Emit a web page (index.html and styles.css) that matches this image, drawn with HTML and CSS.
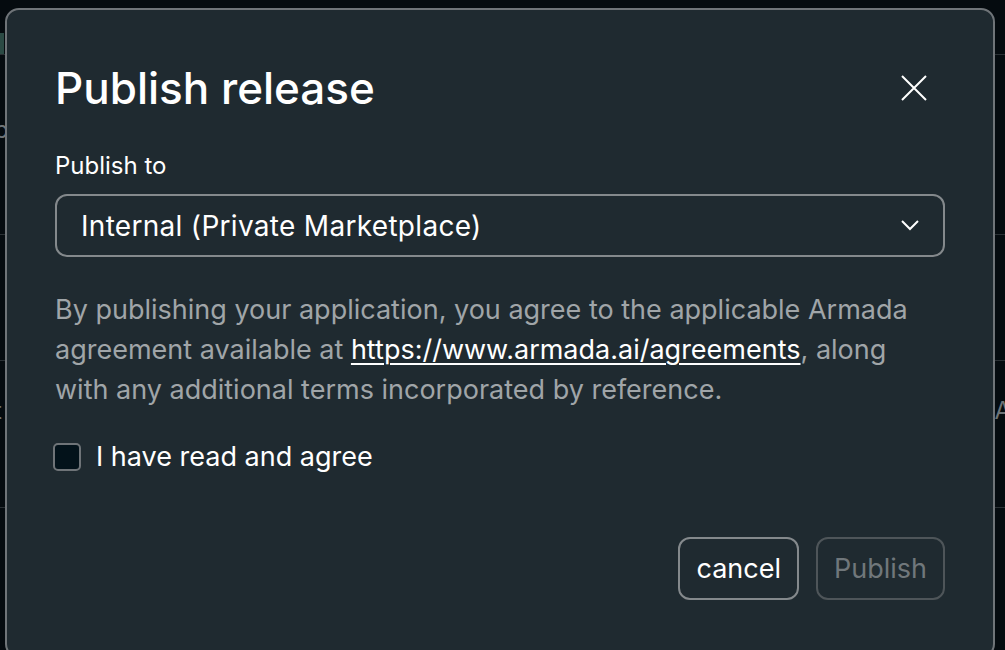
FILE: index.html
```html
<!DOCTYPE html>
<html lang="en">
<head>
  <meta charset="UTF-8">
  <title>Publish release</title>
  <link rel="stylesheet" href="styles.css">
</head>
<body>
  <!-- releases list behind the dialog -->
  <div class="page">
    <div class="row row-head"><span class="tag"></span></div>
    <div class="row row-a"><span class="cell">p</span></div>
    <div class="row row-b"></div>
    <div class="row row-c"><span class="cell">t</span><span class="cell">A</span></div>
    <div class="row row-d"></div>
  </div>

  <div class="overlay">
    <div class="modal">
      <div class="modal-header">
        <h1>Publish release</h1>
        <button class="close" title="Close">
          <svg width="26" height="26" viewBox="0 0 26 26" fill="none" stroke="#fff" stroke-width="2">
            <path d="M1 1L25 25M25 1L1 25"/>
          </svg>
        </button>
      </div>

      <label class="field-label" for="target">Publish to</label>
      <div class="select">
        <span>Internal (Private Marketplace)</span>
        <svg width="18" height="11" viewBox="0 0 18 11" fill="none" stroke="#fff" stroke-width="2">
          <path d="M1 1l8 8 8-8"/>
        </svg>
      </div>

      <p class="terms">
        By publishing your application, you agree to the applicable Armada
        agreement available at <a href="#">https://www.armada.ai/agreements</a>, along
        with any additional terms incorporated by reference.
      </p>

      <label class="agree">
        <span class="box"></span>
        I have read and agree
      </label>

      <div class="actions">
        <button class="btn">cancel</button>
        <button class="btn btn-disabled">Publish</button>
      </div>
    </div>
  </div>
</body>
</html>
```

FILE: styles.css
```css
body {
  margin: 0;
  background: #050b0f;
  font-family: Inter, "Noto Sans", sans-serif;
  color: #fff;
  width: 1005px;
  height: 650px;
  overflow: hidden;
  position: relative;
}

.page {
  display: flex;
  flex-direction: column;
}
.row {
  display: flex;
  justify-content: space-between;
  align-items: flex-start;
  border-bottom: 1px solid #2a3034;
  color: #6d7377;
  font-size: 24px;
}
.row-head { height: 54px; }
.row-a { height: 180px; padding-top: 60px; box-sizing: border-box; }
.row-b { height: 125px; }
.row-c { height: 147px; padding-top: 35px; box-sizing: border-box; }
.row-d { height: 140px; border-bottom: none; }
.tag {
  align-self: flex-end;
  width: 4px;
  height: 21px;
  background: #2b4a44;
}
.cell { margin: 0 -6px; }

.overlay {
  position: absolute;
  inset: 0;
  padding: 8px 10px 0 5px;
}
.modal {
  box-sizing: border-box;
  height: 650px;
  background: #1f2a30;
  border: 2px solid #6f7478;
  border-radius: 14px;
  padding: 18px 48px 0 48px;
  display: flex;
  flex-direction: column;
}

.modal-header {
  display: flex;
  justify-content: space-between;
  align-items: center;
  height: 120px;
}
h1 {
  margin: 0;
  font-size: 44px;
  font-weight: 500;
}
.close {
  background: transparent;
  border: none;
  padding: 0;
  margin-right: 18px;
  display: flex;
  cursor: pointer;
}

.field-label {
  font-size: 24px;
  margin-top: 3px;
  margin-bottom: 14px;
}
.select {
  height: 63px;
  box-sizing: border-box;
  border: 2px solid #84898c;
  border-radius: 12px;
  padding: 0 24px;
  display: flex;
  align-items: center;
  justify-content: space-between;
  font-size: 28px;
  letter-spacing: 0.3px;
}

.terms {
  margin: 33px 0 0;
  font-size: 27px;
  line-height: 40px;
  color: #a0a5a8;
}
.terms a {
  color: #fff;
  text-decoration: underline;
  text-underline-offset: 4px;
  text-decoration-thickness: 2px;
}

.agree {
  display: flex;
  align-items: center;
  gap: 15px;
  margin-top: 30px;
  font-size: 27px;
}
.box {
  width: 24px;
  height: 24px;
  margin-left: -2px;
  border: 2px solid #6f7478;
  border-radius: 5px;
  background: #03121a;
}

.actions {
  display: flex;
  justify-content: flex-end;
  gap: 17px;
  margin-top: 64px;
}
.btn {
  height: 63px;
  padding: 0 16px;
  background: transparent;
  border: 2px solid #84898c;
  border-radius: 12px;
  color: #fff;
  font-family: inherit;
  font-size: 27px;
  cursor: pointer;
}
.btn-disabled {
  border-color: #4e5559;
  color: #70777b;
  cursor: default;
}
```
